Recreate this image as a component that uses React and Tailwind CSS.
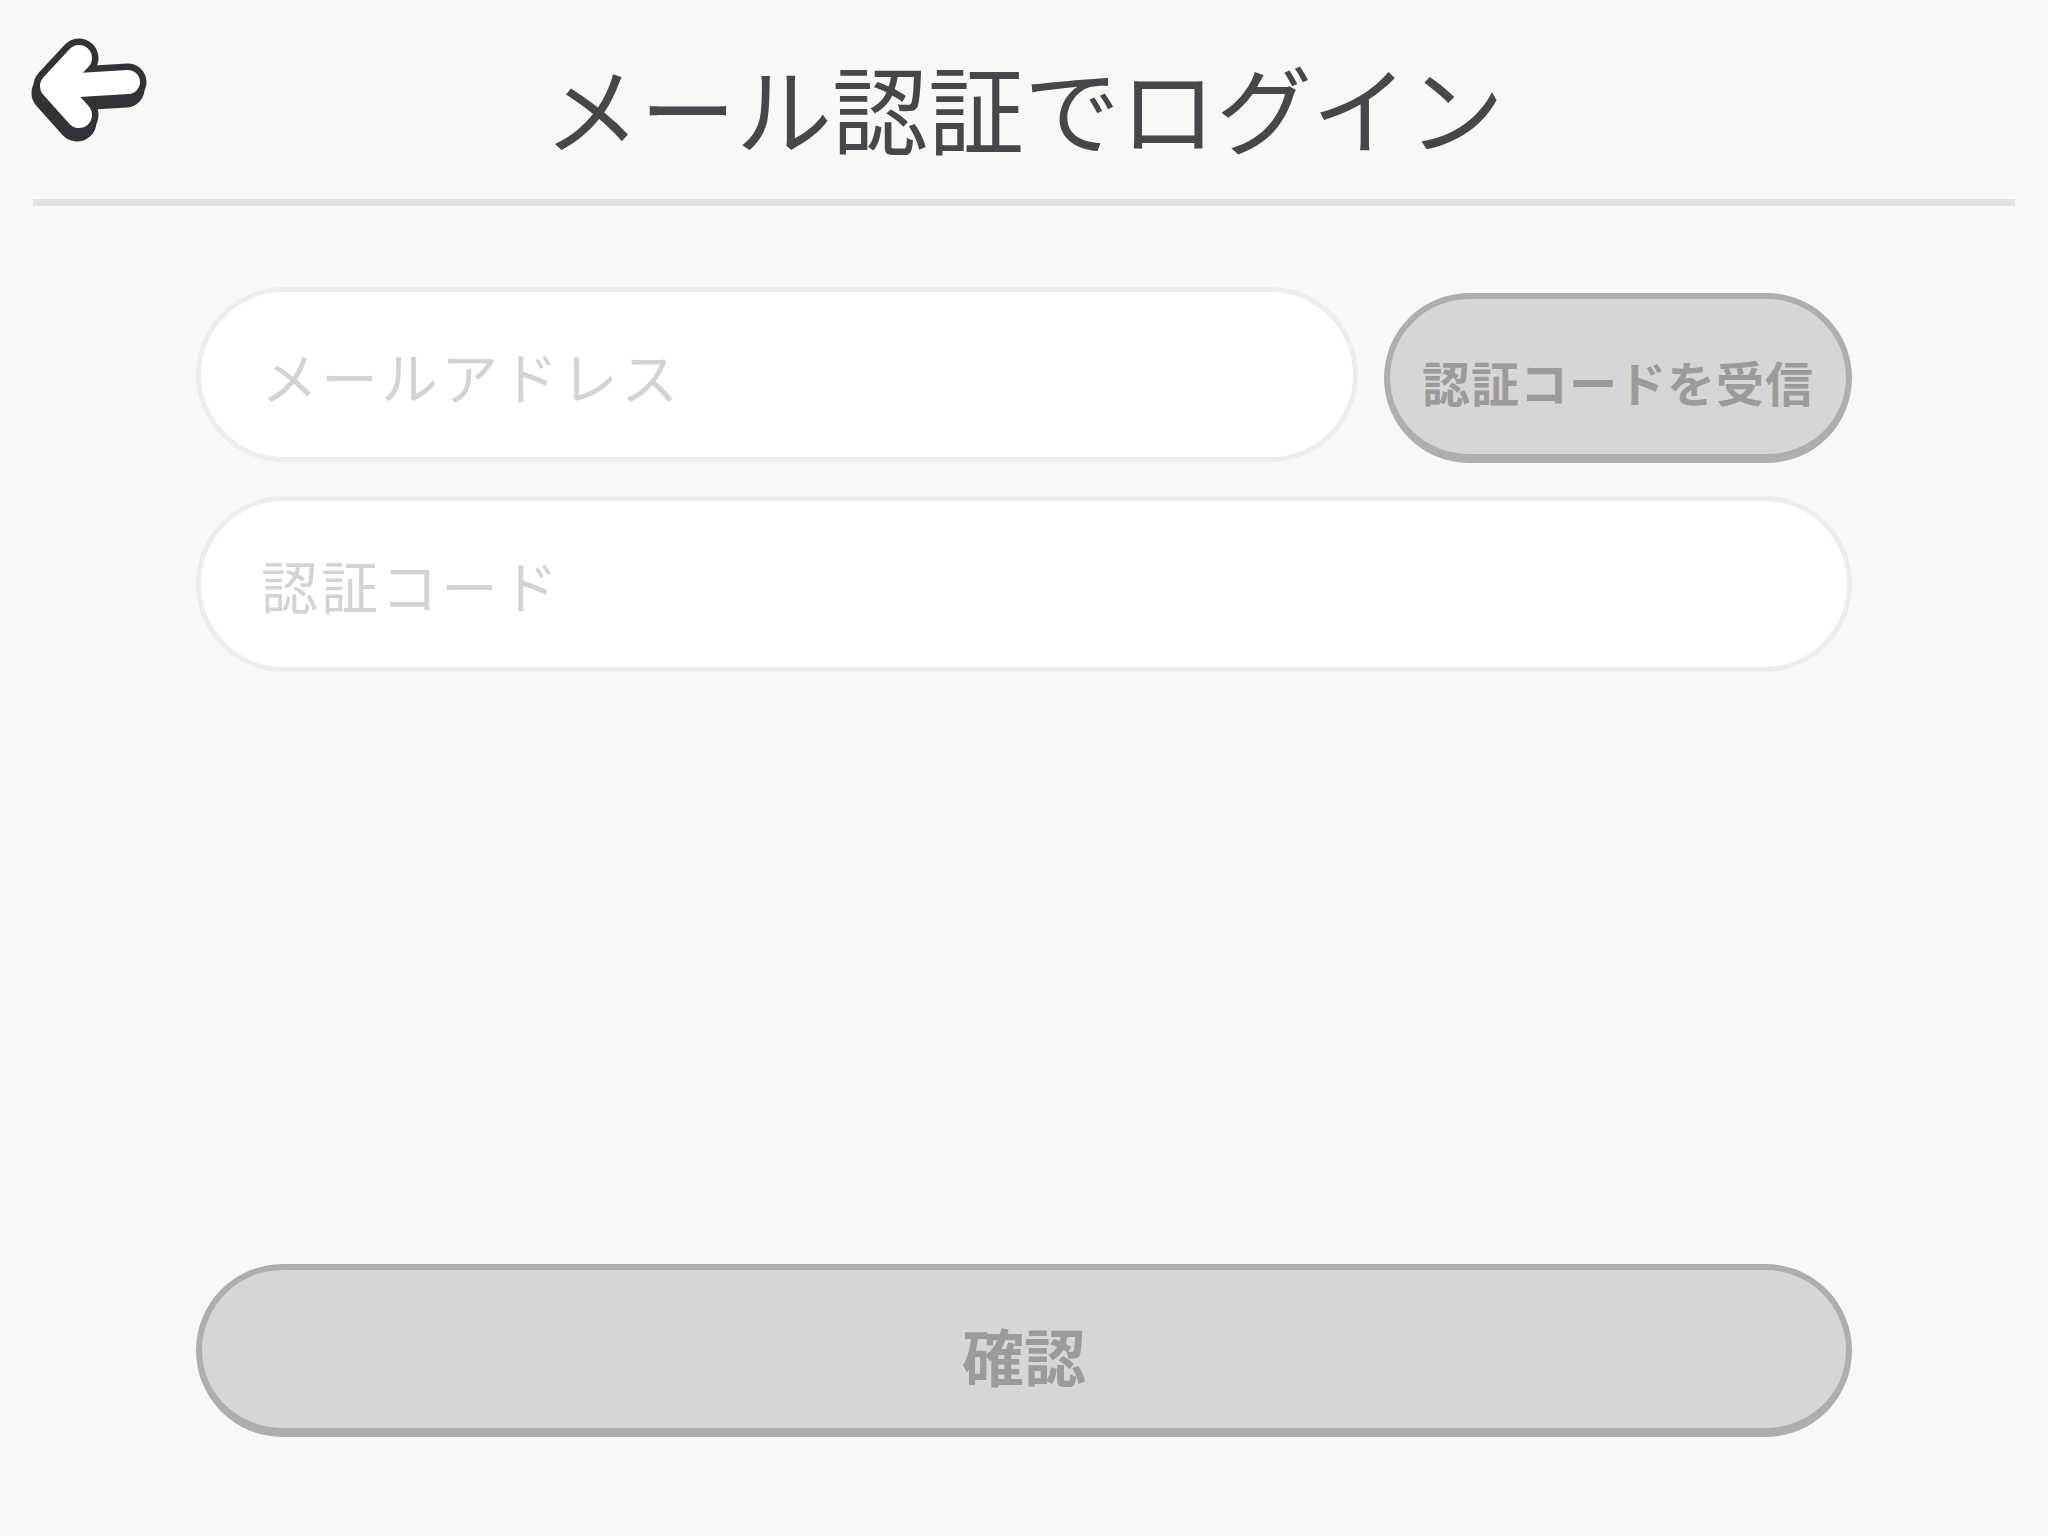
import React, { useState } from "react";

const font = { fontFamily: '"Noto Sans CJK JP", "Noto Sans", sans-serif' };

const BackArrow = () => (
  <svg width="130" height="120" viewBox="0 0 130 120" fill="none">
    {/* shadow */}
    <g transform="translate(-2 7)" stroke="#333238" strokeLinecap="round" strokeLinejoin="round">
      <polyline points="49,27 23,55 49,84" strokeWidth="39" />
      <line x1="32" y1="55" x2="98" y2="51" strokeWidth="37" />
    </g>
    {/* outline */}
    <g stroke="#333238" strokeLinecap="round" strokeLinejoin="round">
      <polyline points="49,27 23,55 49,84" strokeWidth="39" />
      <line x1="32" y1="55" x2="98" y2="51" strokeWidth="37" />
    </g>
    {/* fill */}
    <g stroke="#ffffff" strokeLinecap="round" strokeLinejoin="round">
      <polyline points="49,27 23,55 49,84" strokeWidth="26" />
      <line x1="32" y1="55" x2="98" y2="51" strokeWidth="24" />
    </g>
  </svg>
);

const App = () => {
  const [email, setEmail] = useState("");
  const [code, setCode] = useState("");

  return (
    <div className="min-h-screen w-full bg-[#f9f8f6] text-[#48464b]" style={font}>
      {/* Header */}
      <div className="mx-[33px] border-b-[7px] border-[#e3e2e0]">
        <div className="grid grid-cols-[160px_1fr_160px] items-start h-[199px]">
          <button type="button" className="-ml-[3px] w-fit">
            <div className="pt-[31px]">
              <BackArrow />
            </div>
          </button>
          <h1 className="text-center text-[96px] leading-none font-normal pt-[58px]">
            メール認証でログイン
          </h1>
          <div />
        </div>
      </div>

      {/* Form */}
      <div className="mx-[196px] pt-[81px] flex flex-col gap-[33px]">
        <div className="flex items-start gap-[26px]">
          <input
            type="email"
            value={email}
            onChange={(e) => setEmail(e.target.value)}
            placeholder="メールアドレス"
            className="flex-1 h-[175px] rounded-full bg-white border-[5px] border-[#efedeb] pl-[60px] pr-8 text-[57px] tracking-[3px] outline-none placeholder:text-[#d6d2d3]"
          />
          <button
            type="button"
            className="mt-[6px] w-[468px] h-[170px] rounded-full bg-[#d9d5d6] border-[6px] border-b-[9px] border-[#afadae] text-[#9d9a9c] text-[48px] font-bold tracking-[1px] pt-[8px]"
          >
            認証コードを受信
          </button>
        </div>

        <input
          type="text"
          value={code}
          onChange={(e) => setCode(e.target.value)}
          placeholder="認証コード"
          className="w-full h-[176px] rounded-full bg-white border-[5px] border-[#efedeb] pl-[60px] pr-8 text-[57px] tracking-[3px] outline-none placeholder:text-[#d6d2d3]"
        />
      </div>

      {/* Confirm */}
      <div className="mx-[196px] mt-[592px]">
        <button
          type="button"
          className="w-full h-[173px] rounded-full bg-[#d9d5d6] border-[6px] border-b-[9px] border-[#afadae] text-[#9d9a9c] text-[62px] font-bold pt-[13px]"
        >
          確認
        </button>
      </div>
    </div>
  );
};

export default App;
